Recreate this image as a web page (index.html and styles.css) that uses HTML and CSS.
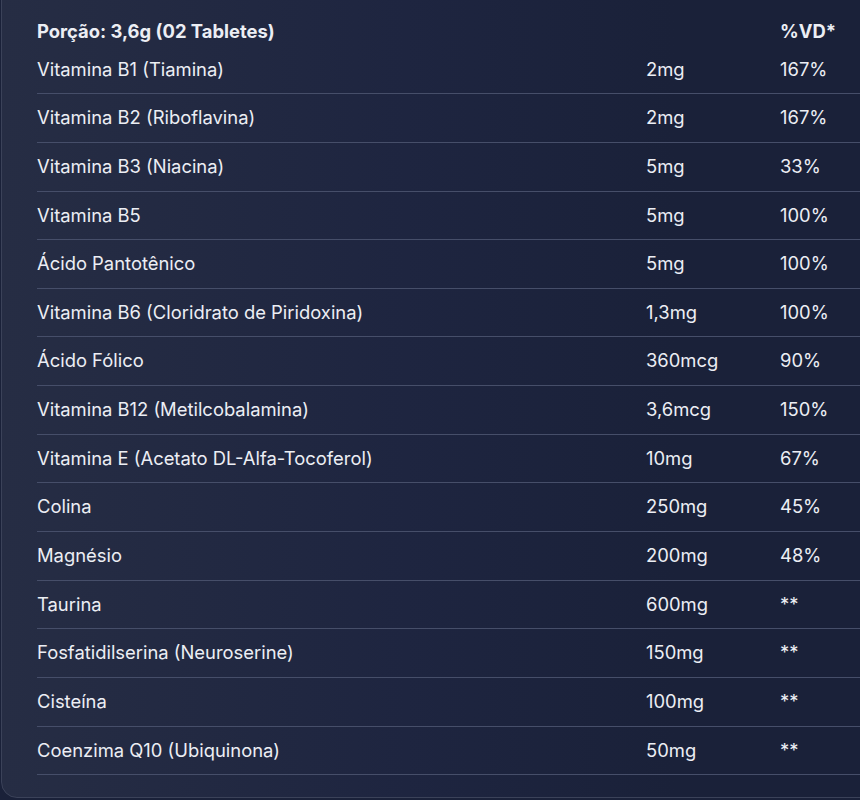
FILE: index.html
```html
<!DOCTYPE html>
<html lang="pt-BR">
<head>
<meta charset="utf-8">
<link rel="stylesheet" href="styles.css">
</head>
<body>
<div class="card">
  <table class="nutri">
    <colgroup><col class="c1"><col class="c2"><col class="c3"></colgroup>
    <thead>
      <tr><th>Porção: 3,6g (02 Tabletes)</th><th></th><th>%VD*</th></tr>
    </thead>
    <tbody>
      <tr><td>Vitamina B1 (Tiamina)</td><td>2mg</td><td>167%</td></tr>
      <tr><td>Vitamina B2 (Riboflavina)</td><td>2mg</td><td>167%</td></tr>
      <tr><td>Vitamina B3 (Niacina)</td><td>5mg</td><td>33%</td></tr>
      <tr><td>Vitamina B5</td><td>5mg</td><td>100%</td></tr>
      <tr><td>Ácido Pantotênico</td><td>5mg</td><td>100%</td></tr>
      <tr><td>Vitamina B6 (Cloridrato de Piridoxina)</td><td>1,3mg</td><td>100%</td></tr>
      <tr><td>Ácido Fólico</td><td>360mcg</td><td>90%</td></tr>
      <tr><td>Vitamina B12 (Metilcobalamina)</td><td>3,6mcg</td><td>150%</td></tr>
      <tr><td>Vitamina E (Acetato DL-Alfa-Tocoferol)</td><td>10mg</td><td>67%</td></tr>
      <tr><td>Colina</td><td>250mg</td><td>45%</td></tr>
      <tr><td>Magnésio</td><td>200mg</td><td>48%</td></tr>
      <tr><td>Taurina</td><td>600mg</td><td>**</td></tr>
      <tr><td>Fosfatidilserina (Neuroserine)</td><td>150mg</td><td>**</td></tr>
      <tr><td>Cisteína</td><td>100mg</td><td>**</td></tr>
      <tr><td>Coenzima Q10 (Ubiquinona)</td><td>50mg</td><td>**</td></tr>
    </tbody>
  </table>
</div>
</body>
</html>
```
FILE: styles.css
```css
html, body {
  margin: 0;
  padding: 0;
  background: #1a2139;
  overflow: hidden;
}
body {
  font-family: Inter, "Noto Sans", sans-serif;
  color: #eceef4;
}
.card {
  margin: -20px -40px 0 1px;
  padding: 27px 0 22px 35px;
  border: 1px solid #3b4259;
  border-radius: 16px;
  background: linear-gradient(90deg, #262d44 0%, #1e2540 45%, #1a2139 75%, #1a2139 100%);
}
.nutri {
  border-collapse: collapse;
  width: 864px;
  table-layout: fixed;
  font-size: 18.4px;
}
.c1 { width: 609px; }
.c2 { width: 134px; }
.nutri th,
.nutri td {
  text-align: left;
  padding: 12px 0;
  line-height: 23.64px;
  white-space: nowrap;
}
.nutri th {
  font-weight: 700;
  border: none;
  padding-bottom: 2px;
}
.nutri td {
  font-weight: 400;
}
.nutri tbody tr {
  border-bottom: 1px solid #464e69;
}
```
